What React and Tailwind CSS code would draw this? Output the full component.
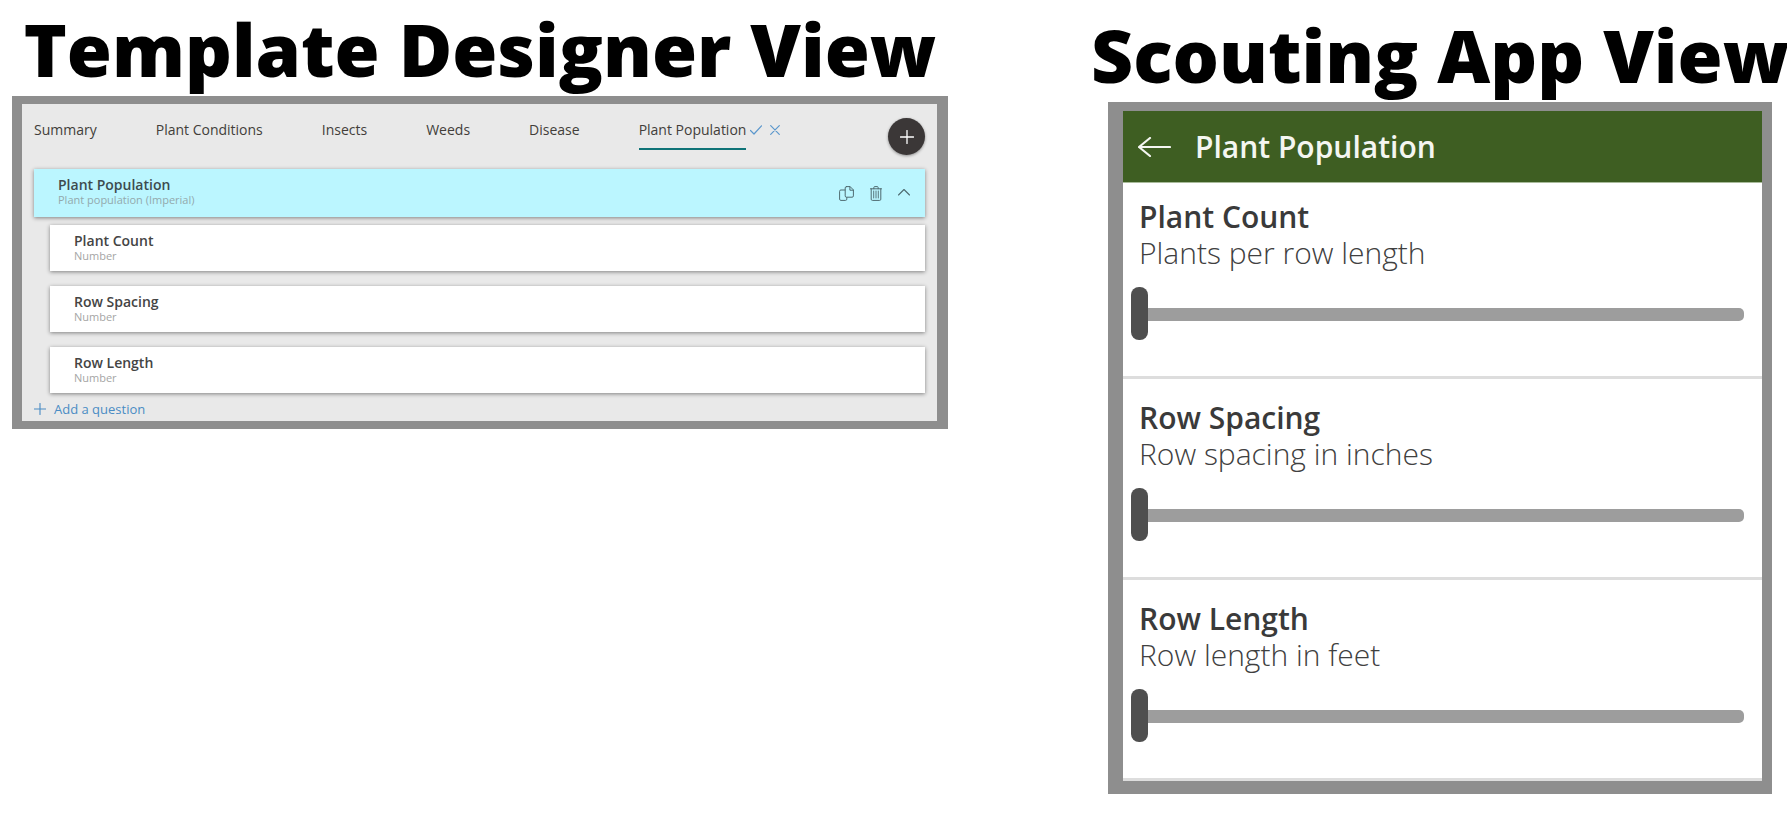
import React, { useState } from "react";

const tabs = ["Summary", "Plant Conditions", "Insects", "Weeds", "Disease", "Plant Population"];

const questions = [
  { title: "Plant Count", type: "Number", hint: "Plants per row length" },
  { title: "Row Spacing", type: "Number", hint: "Row spacing in inches" },
  { title: "Row Length", type: "Number", hint: "Row length in feet" },
];

const Icon = ({ className, viewBox, children }) => (
  <svg
    className={className}
    viewBox={viewBox}
    fill="none"
    stroke="currentColor"
    strokeLinecap="round"
    strokeLinejoin="round"
    aria-hidden="true"
  >
    {children}
  </svg>
);

const PlusIcon = ({ className }) => (
  <Icon className={className} viewBox="0 0 14 14">
    <path d="M7 .5v13M.5 7h13" strokeWidth="1.3" />
  </Icon>
);

const TemplateDesigner = () => {
  const [active, setActive] = useState("Plant Population");

  return (
    <div className="border-8 border-l-10 border-r-11 border-[#8e8e8e] bg-[#e9e9e9] pb-1 pl-3 pr-3">
      <div className="flex items-start justify-between pt-[14px]">
        <div className="flex items-start gap-[59px] pt-[2px]">
          {tabs.map((tab) => (
            <div key={tab} className="flex items-start gap-1">
              <button
                type="button"
                onClick={() => setActive(tab)}
                className={
                  "whitespace-nowrap border-b-2 pb-2 text-left text-[14px] leading-5 font-medium text-[#423e3a] " +
                  (tab === active ? "border-[#0f7377]" : "border-transparent")
                }
              >
                {tab}
              </button>
              {tab === active && (
                <div className="flex h-5 items-center gap-2 text-[#5b97cc]">
                  <button type="button" aria-label="Save tab">
                    <Icon className="h-[10px] w-3" viewBox="0 0 12 10">
                      <path d="M.5 5.5 4 9 11.5.8" strokeWidth="1.2" />
                    </Icon>
                  </button>
                  <button type="button" aria-label="Remove tab">
                    <Icon className="h-[10px] w-[10px]" viewBox="0 0 10 10">
                      <path d="m.7.7 8.6 8.6M9.3.7.7 9.3" strokeWidth="1.2" />
                    </Icon>
                  </button>
                </div>
              )}
            </div>
          ))}
        </div>
        <button
          type="button"
          aria-label="Add tab"
          className="flex h-[37px] w-[37px] items-center justify-center rounded-full bg-[#3b3737] text-white shadow-[0_1px_3px_rgba(0,0,0,0.4)]"
        >
          <PlusIcon className="h-[14px] w-[14px]" />
        </button>
      </div>

      <div className="mt-[14px] flex h-12 items-center justify-between bg-[#bbf6ff] pl-6 pr-[15px] shadow-[0_1px_4px_rgba(0,0,0,0.45)]">
        <div className="pb-[2px]">
          <h2 className="text-[14px] leading-4 font-semibold text-[#3d4b4e]">Plant Population</h2>
          <p className="text-[11px] leading-[14px] text-[#93a9ad]">Plant population (Imperial)</p>
        </div>
        <div className="flex items-center gap-4 text-[#4e6a70]">
          <button type="button" aria-label="Copy">
            <Icon className="h-[15px] w-[15px]" viewBox="0 0 15 15">
              <path d="M6 4H1.9A1.3 1.3 0 0 0 .6 5.3v7.8a1.3 1.3 0 0 0 1.3 1.3h4.6a1.3 1.3 0 0 0 1.3-1.3v-1.6" />
              <path d="M7.5.6h3.6l3.3 3.3v6a1.3 1.3 0 0 1-1.3 1.3H7.5a1.3 1.3 0 0 1-1.3-1.3v-8A1.3 1.3 0 0 1 7.5.6Z" />
              <path d="M10.9.8v3.4h3.4" />
            </Icon>
          </button>
          <button type="button" aria-label="Delete">
            <Icon className="h-[15px] w-3" viewBox="0 0 12 15">
              <path d="M.5 2.8h11M3.8 2.8V1.6a1 1 0 0 1 1-1h2.4a1 1 0 0 1 1 1v1.2" />
              <path d="M1.2 2.8v10.4a1.2 1.2 0 0 0 1.2 1.2h7.2a1.2 1.2 0 0 0 1.2-1.2V2.8" />
              <path d="M3.7 5v7M6 5v7M8.3 5v7" strokeWidth=".9" />
            </Icon>
          </button>
          <button type="button" aria-label="Collapse">
            <Icon className="h-4 w-3" viewBox="0 0 12 16">
              <path d="M.5 10 6 4.5l5.5 5.5" strokeWidth="1.1" />
            </Icon>
          </button>
        </div>
      </div>

      <ul className="mt-2 flex flex-col gap-[15px] pl-4">
        {questions.map((q) => (
          <li key={q.title} className="h-[46px] bg-white pl-6 pt-2 shadow-[0_1px_4px_rgba(0,0,0,0.45)]">
            <h3 className="text-[14px] leading-4 font-semibold text-[#444]">{q.title}</h3>
            <p className="text-[11px] leading-[14px] text-[#a5a5a5]">{q.type}</p>
          </li>
        ))}
      </ul>

      <button type="button" className="mt-2 flex items-center gap-2 text-[13px] leading-4 text-[#4a8cc4]">
        <PlusIcon className="h-3 w-3" />
        Add a question
      </button>
    </div>
  );
};

const SliderRow = ({ title, hint }) => {
  const [value, setValue] = useState(0);

  return (
    <label className="block h-[201px] border-b-3 border-[#dddddd] pt-[21px] first:h-[196px] first:pt-4">
      <span className="block pl-4 text-[30px] leading-9 font-semibold text-[#3a3a3a]">{title}</span>
      <span className="block pl-4 text-[30px] leading-9 font-light text-[#404040]">{hint}</span>
      <div className="mt-[17px] pl-2 pr-[18px]">
        <input
          type="range"
          min="0"
          max="100"
          value={value}
          onChange={(e) => setValue(Number(e.target.value))}
          className="block h-[53px] w-full appearance-none bg-transparent [&::-webkit-slider-runnable-track]:h-[13px] [&::-webkit-slider-runnable-track]:rounded-[5px] [&::-webkit-slider-runnable-track]:bg-[#9d9d9d] [&::-webkit-slider-thumb]:-mt-[21px] [&::-webkit-slider-thumb]:h-[53px] [&::-webkit-slider-thumb]:w-[17px] [&::-webkit-slider-thumb]:appearance-none [&::-webkit-slider-thumb]:rounded-[8px] [&::-webkit-slider-thumb]:bg-[#4f4f4f]"
        />
      </div>
    </label>
  );
};

const ScoutingApp = () => (
  <div className="ml-[17px] mr-[15px] border-t-9 border-r-10 border-b-13 border-l-15 border-[#8e8e8e] bg-white">
    <header className="flex h-[72px] items-center gap-6 border-b border-[#a9bb9b] bg-[#3e5e22] pl-[15px] text-[#f4f6f1]">
      <button type="button" aria-label="Back">
        <Icon className="h-5 w-[33px]" viewBox="0 0 33 20">
          <path d="M32 10H1M12 1 1 10l11 9" strokeWidth="2.2" />
        </Icon>
      </button>
      <h2 className="text-[30px] leading-9 font-semibold">Plant Population</h2>
    </header>
    <div>
      {questions.map((q) => (
        <SliderRow key={q.title} title={q.title} hint={q.hint} />
      ))}
    </div>
  </div>
);

const App = () => (
  <main className="grid grid-cols-[936fr_696fr] items-start gap-[143px] bg-white pl-3 font-['Open_Sans',sans-serif]">
    <section className="min-w-0 pt-[9px]">
      <h1 className="mb-[7px] whitespace-nowrap text-center text-[73px] leading-[80px] font-extrabold text-black">
        Template Designer View
      </h1>
      <TemplateDesigner />
    </section>
    <section className="min-w-0 pt-[15px]">
      <h1 className="mb-[7px] whitespace-nowrap text-center text-[73px] leading-[80px] font-extrabold text-black">
        Scouting App View
      </h1>
      <ScoutingApp />
    </section>
  </main>
);

export default App;
